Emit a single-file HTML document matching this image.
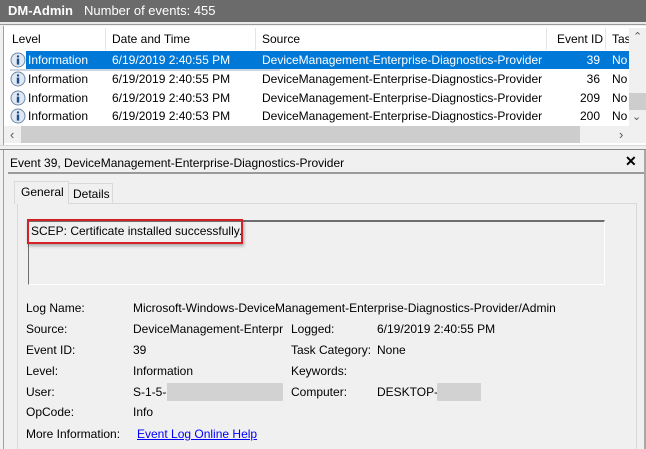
<!DOCTYPE html>
<html><head><style>
*{margin:0;padding:0;box-sizing:border-box}
body{width:646px;height:449px;overflow:hidden;background:#f0f0f0;font-family:"Liberation Sans",sans-serif;font-size:12px;color:#000;position:relative}
.a{position:absolute;white-space:nowrap}
</style></head><body>
<div class="a" style="left:0;top:0;width:646px;height:22px;background:#6b6b6b"></div>
<div class="a" style="left:8px;top:3px;color:#fff;font-weight:bold;font-size:13px">DM-Admin</div>
<div class="a" style="left:84px;top:3px;color:#fff;font-size:13px">Number of events: 455</div>
<div class="a" style="left:0;top:22px;width:646px;height:2px;background:#e8e8e8"></div>
<div class="a" style="left:0;top:24px;width:646px;height:1px;background:#9a9a9a"></div>
<div class="a" style="left:3px;top:26px;width:643px;height:119px;background:#fff;border-left:1px solid #a0a0a0"></div>
<!-- header -->
<div class="a" style="left:12px;top:32px">Level</div>
<div class="a" style="left:105px;top:28px;width:1px;height:22px;background:#e5e5e5"></div>
<div class="a" style="left:112px;top:32px">Date and Time</div>
<div class="a" style="left:255px;top:28px;width:1px;height:22px;background:#e5e5e5"></div>
<div class="a" style="left:262px;top:32px">Source</div>
<div class="a" style="left:546px;top:28px;width:1px;height:22px;background:#e5e5e5"></div>
<div class="a" style="left:557px;top:32px">Event ID</div>
<div class="a" style="left:605px;top:28px;width:1px;height:22px;background:#e5e5e5"></div>
<div class="a" style="left:612px;top:32px">Tas</div>
<!-- selected row -->
<div class="a" style="left:26px;top:51px;width:603px;height:18px;background:#0078d7"></div>
<div class="a" style="left:10px;top:69px;width:270px;height:2px;background:#cdd6e0"></div>
<!-- rows -->
<div style="color:#fff">
<div class="a" style="left:28px;top:53px">Information</div>
<div class="a" style="left:112px;top:53px">6/19/2019 2:40:55 PM</div>
<div class="a" style="left:262px;top:53px">DeviceManagement-Enterprise-Diagnostics-Provider</div>
<div class="a" style="left:580px;top:53px;width:20px;text-align:right">39</div>
<div class="a" style="left:612px;top:53px">No</div>
</div>
<div class="a" style="left:28px;top:72px">Information</div><div class="a" style="left:112px;top:72px">6/19/2019 2:40:55 PM</div><div class="a" style="left:262px;top:72px">DeviceManagement-Enterprise-Diagnostics-Provider</div><div class="a" style="left:570px;top:72px;width:30px;text-align:right">36</div><div class="a" style="left:612px;top:72px">No</div>
<div class="a" style="left:28px;top:91px">Information</div><div class="a" style="left:112px;top:91px">6/19/2019 2:40:53 PM</div><div class="a" style="left:262px;top:91px">DeviceManagement-Enterprise-Diagnostics-Provider</div><div class="a" style="left:570px;top:91px;width:30px;text-align:right">209</div><div class="a" style="left:612px;top:91px">No</div>
<div class="a" style="left:28px;top:109px">Information</div><div class="a" style="left:112px;top:109px">6/19/2019 2:40:53 PM</div><div class="a" style="left:262px;top:109px">DeviceManagement-Enterprise-Diagnostics-Provider</div><div class="a" style="left:570px;top:109px;width:30px;text-align:right">200</div><div class="a" style="left:612px;top:109px">No</div>
<!-- icons -->
<svg class="a" style="left:10px;top:52px" width="16" height="72" viewBox="0 0 16 72">
<g id="ic"><circle cx="8" cy="8" r="7" fill="#dfe8f3" stroke="#6f8aa8"/><circle cx="8" cy="4.5" r="1.2" fill="#1f4e8c"/><rect x="6.8" y="6.6" width="2.4" height="6" fill="#1f4e8c"/></g>
<use href="#ic" y="19"/><use href="#ic" y="38"/><use href="#ic" y="56"/>
</svg>
<!-- vscroll -->
<div class="a" style="left:629px;top:28px;width:17px;height:98px;background:#f0f0f0"></div>
<div class="a" style="left:633px;top:30px;font-size:11px;color:#555">&#8963;</div>
<div class="a" style="left:629px;top:93px;width:17px;height:17px;background:#cdcdcd"></div>
<div class="a" style="left:632px;top:110px;font-size:11px;color:#555">&#8964;</div>
<!-- hscroll -->
<div class="a" style="left:4px;top:126px;width:642px;height:17px;background:#f0f0f0"></div>
<div class="a" style="left:21px;top:126px;width:559px;height:17px;background:#cdcdcd"></div>
<div class="a" style="left:10px;top:127px;font-size:13px;color:#555">&lsaquo;</div>
<div class="a" style="left:619px;top:127px;font-size:13px;color:#555">&rsaquo;</div>
<!-- lower -->
<div class="a" style="left:0;top:145px;width:646px;height:1px;background:#d8d8d8"></div>
<div class="a" style="left:3px;top:150px;width:1px;height:299px;background:#a0a0a0"></div>
<div class="a" style="left:0;top:149px;width:646px;height:1px;background:#888"></div>
<div class="a" style="left:10px;top:156px">Event 39, DeviceManagement-Enterprise-Diagnostics-Provider</div>
<div class="a" style="left:625px;top:153px;font-weight:bold;font-size:14px">&#x2715;</div>
<div class="a" style="left:8px;top:172px;width:636px;height:2px;background:#9a9a9a"></div>
<div class="a" style="left:644px;top:150px;width:2px;height:299px;background:#a8a8a8"></div>
<!-- tabs -->
<div class="a" style="left:17px;top:203px;width:620px;height:246px;border:1px solid #d9d9d9;border-bottom:none;background:#f0f0f0"></div>
<div class="a" style="left:68px;top:183px;width:45px;height:20px;border:1px solid #d9d9d9;border-bottom:none;background:#f0f0f0"></div>
<div class="a" style="left:73px;top:187px">Details</div>
<div class="a" style="left:14px;top:181px;width:55px;height:23px;border:1px solid #d9d9d9;border-bottom:none;background:#f0f0f0"></div>
<div class="a" style="left:21px;top:185px">General</div>
<!-- message box -->
<div class="a" style="left:28px;top:220px;width:577px;height:65px;border:1px solid #fff;border-top:2px solid #6e6e6e;border-left:1px solid #6e6e6e"></div>
<div class="a" style="left:31px;top:224px">SCEP: Certificate installed successfully.</div>
<div class="a" style="left:27px;top:219px;width:216px;height:25px;border:2px solid #d42027;box-shadow:1px 2px 3px rgba(0,0,0,.3)"></div>
<!-- details -->
<div class="a" style="left:26px;top:301px">Log Name:</div><div class="a" style="left:133px;top:301px">Microsoft-Windows-DeviceManagement-Enterprise-Diagnostics-Provider/Admin</div>
<div class="a" style="left:26px;top:322px">Source:</div><div class="a" style="left:133px;top:322px">DeviceManagement-Enterpr</div>
<div class="a" style="left:291px;top:322px">Logged:</div><div class="a" style="left:377px;top:322px">6/19/2019 2:40:55 PM</div>
<div class="a" style="left:26px;top:343px">Event ID:</div><div class="a" style="left:133px;top:343px">39</div>
<div class="a" style="left:291px;top:343px">Task Category:</div><div class="a" style="left:377px;top:343px">None</div>
<div class="a" style="left:26px;top:364px">Level:</div><div class="a" style="left:133px;top:364px">Information</div>
<div class="a" style="left:291px;top:364px">Keywords:</div>
<div class="a" style="left:26px;top:385px">User:</div><div class="a" style="left:133px;top:385px">S-1-5-</div>
<div class="a" style="left:167px;top:383px;width:116px;height:18px;background:#d2d2d2"></div>
<div class="a" style="left:291px;top:385px">Computer:</div><div class="a" style="left:377px;top:385px">DESKTOP-</div>
<div class="a" style="left:437px;top:383px;width:44px;height:18px;background:#d2d2d2"></div>
<div class="a" style="left:26px;top:405px">OpCode:</div><div class="a" style="left:133px;top:405px">Info</div>
<div class="a" style="left:26px;top:427px">More Information:</div><div class="a" style="left:137px;top:427px;color:#0000ff;text-decoration:underline">Event Log Online Help</div>
</body></html>
